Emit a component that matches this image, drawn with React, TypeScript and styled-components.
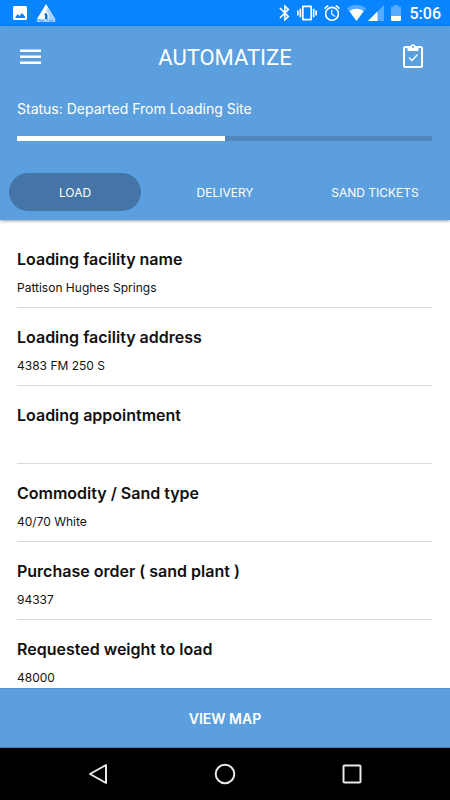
import React, { useState } from "react";
import styled, { createGlobalStyle } from "styled-components";

const sans = `Inter, "Liberation Sans", sans-serif`;
const roboto = `Roboto, "Liberation Sans", sans-serif`;
const blue = "#5c9fde";

const GlobalStyle = createGlobalStyle`
  * { box-sizing: border-box; }
  body { margin: 0; background: #fff; }
  button { border: 0; padding: 0; background: none; color: inherit; font: inherit; cursor: pointer; }
`;

const Screen = styled.div`
  display: flex;
  flex-direction: column;
  height: 100vh;
  font-family: ${sans};
  color: #111;
`;

const StatusBar = styled.div`
  display: flex;
  align-items: center;
  justify-content: space-between;
  flex: none;
  height: 26px;
  padding: 0 9px 0 13px;
  background: #0884ff;
  color: #fff;
`;

const IconGroup = styled.div<{ $gap: number }>`
  display: flex;
  align-items: center;
  gap: ${(p) => p.$gap}px;
`;

const Clock = styled.time`
  margin-left: 2px;
  padding-top: 2px;
  font: 500 16px/24px ${roboto};
`;

const Header = styled.header`
  flex: none;
  z-index: 1;
  background: ${blue};
  color: #fff;
  box-shadow: 0 1px 3px rgba(0, 0, 0, 0.4);
`;

const TitleRow = styled.div`
  display: grid;
  grid-template-columns: 1fr auto 1fr;
  align-items: center;
  height: 62px;
  padding: 0 20px;
`;

const Title = styled.h1`
  margin: 0;
  padding-top: 2px;
  text-align: center;
  font: 400 22px/28px ${roboto};
`;

const IconButton = styled.button<{ $side: "start" | "end" }>`
  display: flex;
  justify-content: center;
  align-items: center;
  justify-self: ${(p) => p.$side};
  height: 32px;
  margin-right: ${(p) => (p.$side === "end" ? 7 : 0)}px;
`;

const StatusBlock = styled.div`
  padding: 11px 18px 0 17px;
`;

const StatusText = styled.p`
  margin: 0;
  font-size: 14px;
  line-height: 20px;
`;

const Track = styled.div`
  height: 5px;
  margin-top: 17px;
  background: #5087bd;
`;

const Fill = styled.div`
  height: 100%;
  background: #fff;
`;

const Tabs = styled.div`
  display: grid;
  grid-template-columns: repeat(3, 1fr);
  padding: 32px 0 9px;
`;

const Tab = styled.button<{ $active: boolean }>`
  height: 38px;
  margin: 0 9px;
  border-radius: 19px;
  background: ${(p) => (p.$active ? "#4475a6" : "transparent")};
  font-size: 12px;
  white-space: nowrap;
`;

const Details = styled.dl`
  flex: 1;
  min-height: 0;
  overflow: hidden;
  margin: 0;
  padding: 10px 18px 0 17px;
  background: #fff;
`;

const Field = styled.div`
  height: 78px;
  padding-top: 17px;
  border-bottom: 1px solid #d9d9d9;
`;

const FieldName = styled.dt`
  font-size: 16px;
  font-weight: 600;
  line-height: 24px;
`;

const FieldValue = styled.dd`
  margin: 7px 0 0;
  font-size: 12px;
  line-height: 20px;
`;

const MapButton = styled.button`
  && {
    flex: none;
    height: 60px;
    border-top: 1px solid #4d95d8;
    border-bottom: 1px solid #467fb8;
    background: ${blue};
    color: #fff;
    font-size: 14px;
    font-weight: 600;
  }
`;

const SystemNav = styled.nav`
  display: grid;
  grid-template-columns: repeat(3, 1fr);
  flex: none;
  height: 52px;
  padding: 0 35px;
  background: #000;
`;

const NavButton = styled.button`
  display: flex;
  align-items: center;
  justify-content: center;
`;

const tabs = ["LOAD", "DELIVERY", "SAND TICKETS"];

const fields = [
  { name: "Loading facility name", value: "Pattison Hughes Springs" },
  { name: "Loading facility address", value: "4383 FM 250 S" },
  { name: "Loading appointment", value: "" },
  { name: "Commodity / Sand type", value: "40/70 White" },
  { name: "Purchase order ( sand plant )", value: "94337" },
  { name: "Requested weight to load", value: "48000" },
];

const PhotoIcon = () => (
  <svg width="14" height="14" viewBox="0 0 14 14" fill="#fff" aria-hidden="true">
    <path fillRule="evenodd" d="M1.5 0h11A1.5 1.5 0 0 1 14 1.500v11a1.500 1.500 0 0 1-1.500 1.500h-11A1.500 1.500 0 0 1 0 12.500v-11A1.500 1.500 0 0 1 1.500 0zM2 12h10V10.500L9 7 6.500 10 4.500 8z" />
  </svg>
);

const BrandIcon = () => (
  <svg width="20" height="18" viewBox="0 0 20 18" aria-hidden="true">
    <path d="M10 0 1 15h18z" fill="#fff" />
    <path d="M12 3.400 19 15h-6.500V9.500L10 7z" fill="#a9d3ff" />
    <path d="M9 15v-4H8l2-2.500 1.500 2.500V15z" fill="#0870d5" />
    <text x="10" y="17.800" fontSize="3" fontWeight="700" fontFamily="Roboto" textAnchor="middle" fill="#fff">AUTOMATIZE</text>
  </svg>
);

const BluetoothIcon = () => (
  <svg width="11" height="16" viewBox="5 2 13 20" fill="#fff" aria-hidden="true">
    <path d="M17.710 7.710 12 2h-1v7.590L6.410 5 5 6.410 10.590 12 5 17.590 6.410 19 11 14.410V22h1l5.710-5.710-4.300-4.290zM13 5.830l1.880 1.880L13 9.590zm1.880 10.460L13 18.170v-3.760z" />
  </svg>
);

const VibrateIcon = () => (
  <svg width="20" height="20" viewBox="0 0 24 24" fill="#fff" aria-hidden="true">
    <path d="M0 15h2V9H0zm3 2h2V7H3zm19-8v6h2V9zm-3 8h2V7h-2zM16.500 3h-9C6.670 3 6 3.670 6 4.500v15c0 .83.67 1.500 1.500 1.500h9c.83 0 1.500-.67 1.500-1.500v-15c0-.83-.67-1.500-1.500-1.500zM16 19H8V5h8z" />
  </svg>
);

const AlarmIcon = () => (
  <svg width="16" height="16" viewBox="2 2 20 20" fill="#fff" aria-hidden="true">
    <path d="m22 5.720-4.600-3.860-1.290 1.530 4.600 3.860zM7.880 3.390 6.600 1.860 2 5.710l1.290 1.530zM12.500 8H11v6l4.750 2.850.75-1.230-4-2.370zM12 4a9 9 0 1 0 0 18 9 9 0 0 0 0-18zm0 16a7 7 0 1 1 0-14 7 7 0 0 1 0 14z" />
  </svg>
);

const SignalIcons = () => (
  <svg width="37" height="16" viewBox="0 0 37 16" aria-hidden="true">
    <path d="M0 3.500C5.500-1.200 13.500-1.200 19 3.500L9.500 16z" fill="#55abff" />
    <path d="M2.500 6.300C6.500 3 12.500 3 16.500 6.300L9.500 16z" fill="#fff" />
    <path d="M37 0v16H21z" fill="#55abff" />
    <path d="M30.500 6.500V16H21z" fill="#fff" />
  </svg>
);

const BatteryIcon = () => (
  <svg width="10" height="16" viewBox="0 0 10 16" aria-hidden="true">
    <path d="M3 0h4v1.500h2.200l.8.800V11H0V2.300l.8-.8H3z" fill="#55abff" />
    <path d="M0 11h10v4.200l-.8.800H.8l-.8-.8z" fill="#fff" />
  </svg>
);

const MenuIcon = () => (
  <svg width="22" height="16" viewBox="0 0 22 16" fill="#fff" aria-hidden="true">
    <path d="M0 .5h21v2.500H0zM0 6.500h21v2.500H0zM0 12.500h21v2.500H0z" />
  </svg>
);

const ClipboardIcon = () => (
  <svg width="20" height="26" viewBox="0 0 20 26" fill="none" aria-hidden="true">
    <rect x="1" y="3" width="18" height="20" rx="1.500" stroke="#fff" strokeWidth="2" />
    <path d="M4.500 2.500H7.200a2.900 2.900 0 0 1 5.600 0h2.700V7h-11z" fill="#fff" />
    <circle cx="10" cy="3" r="1" fill={blue} />
    <path d="m6 13.500 3 3 5.500-6" stroke="#fff" strokeWidth="1.300" />
  </svg>
);

export default function App() {
  const [active, setActive] = useState(0);
  const progress = 50;

  return (
    <Screen>
      <GlobalStyle />
      <StatusBar>
        <IconGroup $gap={9}>
          <PhotoIcon />
          <BrandIcon />
        </IconGroup>
        <IconGroup $gap={7}>
          <BluetoothIcon />
          <VibrateIcon />
          <AlarmIcon />
          <SignalIcons />
          <BatteryIcon />
          <Clock>5:06</Clock>
        </IconGroup>
      </StatusBar>
      <Header>
        <TitleRow>
          <IconButton $side="start" aria-label="Menu"><MenuIcon /></IconButton>
          <Title>AUTOMATIZE</Title>
          <IconButton $side="end" aria-label="Tasks"><ClipboardIcon /></IconButton>
        </TitleRow>
        <StatusBlock>
          <StatusText>Status: Departed From Loading Site</StatusText>
          <Track role="progressbar" aria-label="Trip progress" aria-valuenow={progress} aria-valuemin={0} aria-valuemax={100}>
            <Fill style={{ width: `${progress}%` }} />
          </Track>
        </StatusBlock>
        <Tabs role="tablist">
          {tabs.map((label, i) => (
            <Tab key={label} role="tab" aria-selected={i === active} $active={i === active} onClick={() => setActive(i)}>
              {label}
            </Tab>
          ))}
        </Tabs>
      </Header>
      <Details>
        {fields.map((f) => (
          <Field key={f.name}>
            <FieldName>{f.name}</FieldName>
            <FieldValue>{f.value}</FieldValue>
          </Field>
        ))}
      </Details>
      <MapButton>VIEW MAP</MapButton>
      <SystemNav aria-label="System">
        <NavButton aria-label="Back">
          <svg width="20" height="22" viewBox="0 0 20 22" fill="none" stroke="#e8e8e8" strokeWidth="2" strokeLinejoin="round">
            <path d="M18 2v18L2 11z" />
          </svg>
        </NavButton>
        <NavButton aria-label="Home">
          <svg width="22" height="22" viewBox="0 0 22 22" fill="none" stroke="#e8e8e8" strokeWidth="2">
            <circle cx="11" cy="11" r="9.300" />
          </svg>
        </NavButton>
        <NavButton aria-label="Recent apps">
          <svg width="20" height="20" viewBox="0 0 20 20" fill="none" stroke="#e8e8e8" strokeWidth="2">
            <rect x="1.500" y="1.500" width="17" height="17" rx="1" />
          </svg>
        </NavButton>
      </SystemNav>
    </Screen>
  );
}
